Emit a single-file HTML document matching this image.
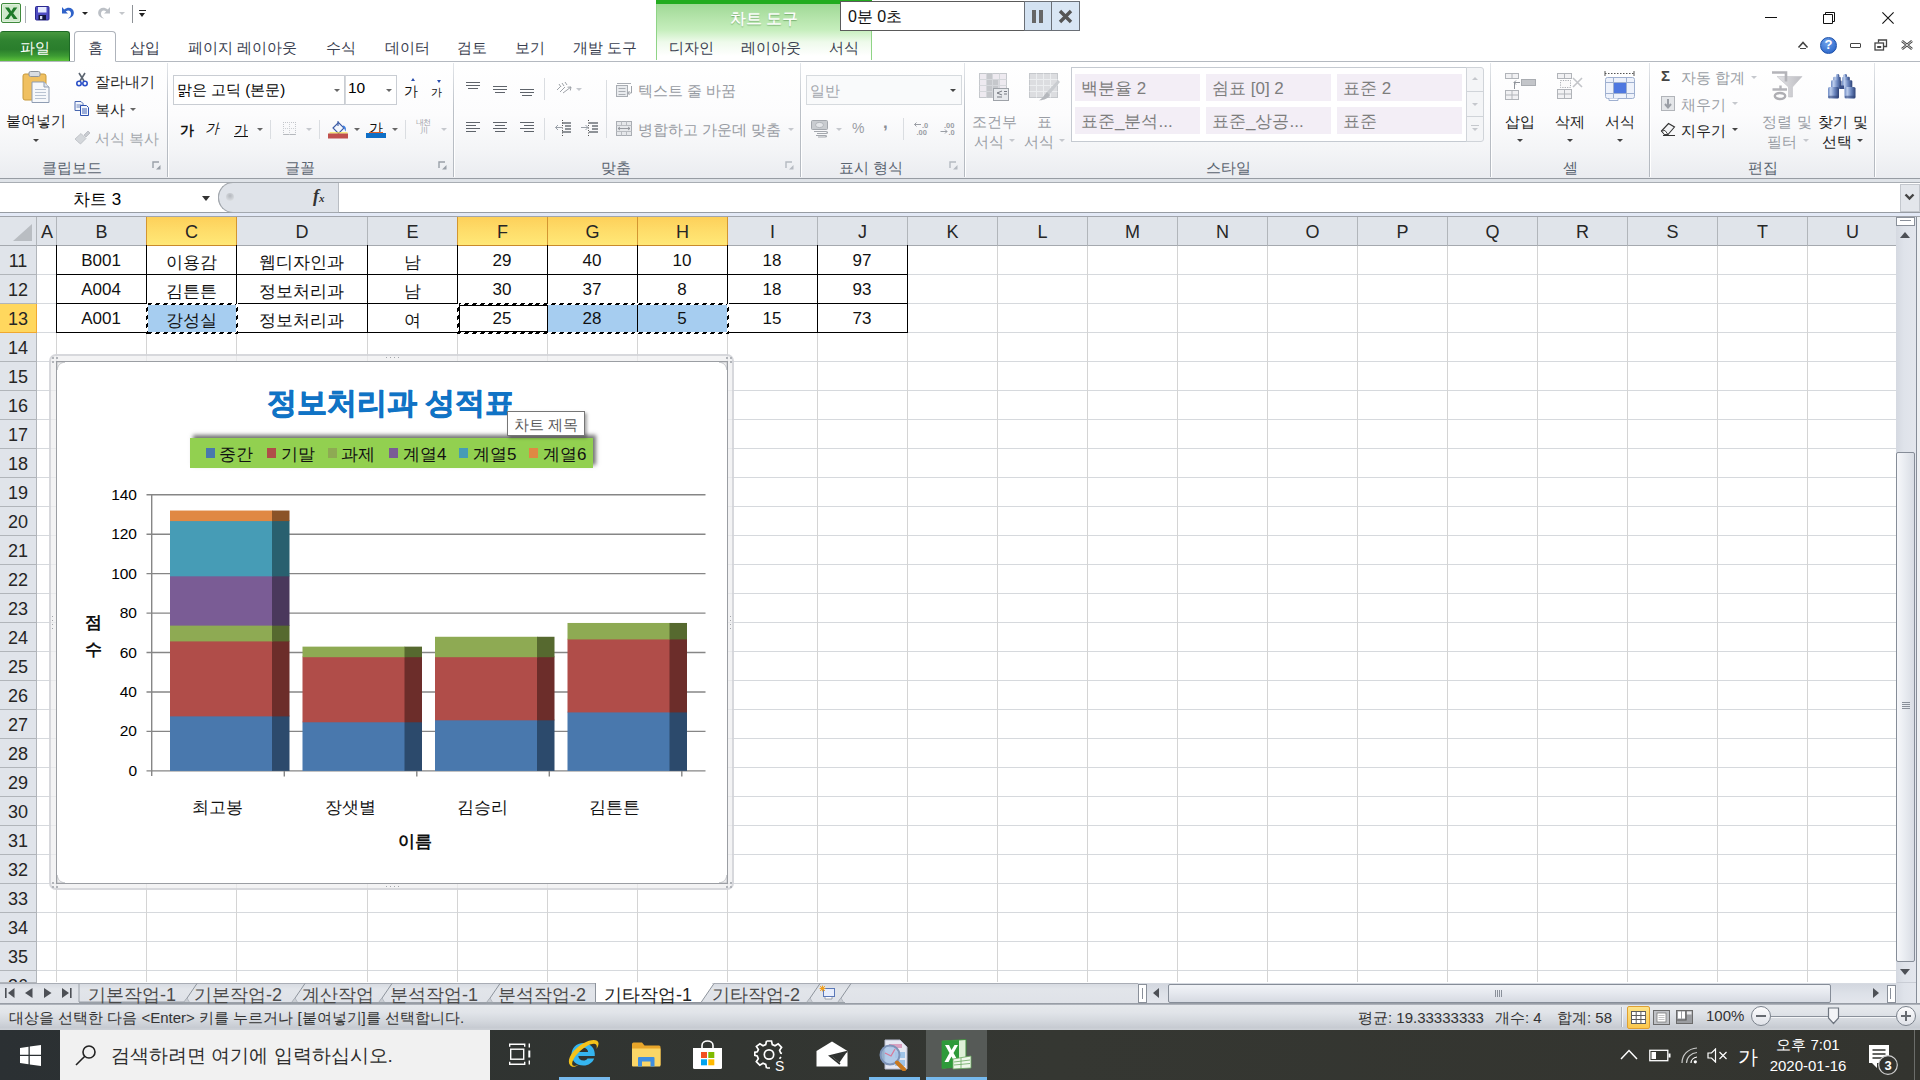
<!DOCTYPE html>
<html lang="ko">
<head>
<meta charset="utf-8">
<title>Excel</title>
<style>
@font-face{font-family:"KFix";src:local("Liberation Sans");unicode-range:U+AC00-D7A3,U+3131-318E,U+5DDD;size-adjust:133.33%}
*{box-sizing:border-box;margin:0;padding:0}
html,body{width:1920px;height:1080px;overflow:hidden;background:#fff}
body{font-family:"KFix","Liberation Sans",sans-serif;font-size:15px;color:#1e1e1e;position:relative}
.a{position:absolute}
.t{position:absolute;white-space:nowrap;font-size:15px;line-height:20px;height:20px;color:#1e1e1e}
.c{text-align:center}
.g{color:#8a8f96}
.gl{color:#5a6470}
.sep{position:absolute;width:1px;background:linear-gradient(#e3e6ea,#bcc1c8 40%,#b4b9c0);top:63px;height:114px}
.sep2{position:absolute;width:1px;background:#fff;top:63px;height:114px}
.dd{position:absolute;width:0;height:0;border-left:3px solid transparent;border-right:3px solid transparent;border-top:3px solid #444}
.ddg{border-top-color:#a0a4aa}
.ch{position:absolute;top:217px;height:29px;background:#e0e4ea;border-right:1px solid #b1b5ba;border-bottom:1px solid #a5a9af;font-size:18px;line-height:30px;text-align:center;color:#262626}
.chs{background:linear-gradient(#fdd05a,#fedd6a 50%,#ffe877);border-right:1px solid #d39631;border-bottom:1px solid #c98a2b;box-shadow:-1px 0 0 #d39631}
.rh{position:absolute;left:0;width:37px;height:29px;background:#e0e4ea;border-right:1px solid #b1b5ba;border-bottom:1px solid #b1b5ba;font-size:18px;line-height:30px;text-align:center;color:#262626}
.vl{position:absolute;top:245px;width:1px;height:737px;background:#d4d4d4}
.cell{position:absolute;height:29px;line-height:30px;font-size:17px;text-align:center;color:#111}
</style>
</head>
<body>
<!-- ===== Title bar / QAT ===== -->
<div class="a" style="left:0;top:0;width:1920px;height:61px;background:#fff"></div>
<!-- excel icon -->
<svg class="a" style="left:1px;top:3px" width="21" height="21" viewBox="0 0 21 21">
<rect x="0.5" y="0.5" width="19" height="19" rx="1.5" fill="#dff0dc" stroke="#3f8a3c"/>
<rect x="2" y="2" width="16" height="16" fill="#cfe8cb"/>
<path d="M4 4.5 L8 4.5 L10.2 8.3 L12.6 4.5 L16.3 4.5 L12.2 10.2 L16.6 16 L12.6 16 L10.1 12.2 L7.6 16 L3.8 16 L8.2 10.2 Z" fill="#1f7a2a"/>
</svg>
<div class="a" style="left:25px;top:6px;width:1px;height:17px;background:#a9adb3"></div>
<!-- save -->
<svg class="a" style="left:35px;top:6px" width="15" height="15" viewBox="0 0 15 15">
<rect x="0.5" y="0.5" width="13.5" height="13.5" rx="1" fill="#4f4cc2" stroke="#2b2990"/>
<rect x="3" y="1" width="8.5" height="5.5" fill="#e8ecff"/>
<rect x="3.5" y="9" width="7.5" height="5" fill="#15173f"/>
<rect x="5" y="10" width="2.3" height="3.2" fill="#d8dcf5"/>
</svg>
<!-- undo -->
<svg class="a" style="left:61px;top:6px" width="14" height="14" viewBox="0 0 14 14">
<path d="M1 1 L1 7.5 L7 7.5 L4.8 5.4 C7.6 3.3 10.4 5.2 10 8.2 C9.7 10.4 8.4 11.6 6.8 12.6 C10.8 12 13.2 9.3 12.8 6 C12.3 1.8 7.2 0.2 3.2 3.5 Z" fill="#2f62c9"/>
</svg>
<div class="dd" style="left:82px;top:12px;border-top-color:#222"></div>
<!-- redo (disabled) -->
<svg class="a" style="left:97px;top:6px" width="14" height="14" viewBox="0 0 14 14">
<path d="M13 1 L13 7.5 L7 7.5 L9.2 5.4 C6.4 3.3 3.6 5.2 4 8.2 C4.3 10.4 5.6 11.6 7.2 12.6 C3.2 12 0.8 9.3 1.2 6 C1.7 1.8 6.8 0.2 10.8 3.5 Z" fill="#bcc0c6"/>
</svg>
<div class="dd ddg" style="left:119px;top:12px;border-top-color:#c3c6ca"></div>
<div class="a" style="left:132px;top:5px;width:1px;height:18px;background:#8d9196"></div>
<div class="a" style="left:139px;top:10px;width:7px;height:1px;background:#222"></div>
<div class="dd" style="left:139px;top:13px;border-left-width:3.5px;border-right-width:3.5px;border-top:4px solid #222"></div>

<!-- chart tools contextual band -->
<div class="a" style="left:656px;top:0;width:216px;height:60px;background:linear-gradient(#96d68c 0px,#a6dc9c 8px,#c6eebd 30px,#eefaeb 42px,#ffffff 56px);border-left:1px solid #8fd486;border-right:1px solid #8fd486"></div>
<div class="a" style="left:656px;top:0;width:216px;height:4px;background:#22ac1e"></div>
<div class="t c" style="left:656px;top:9px;width:216px;color:#ffffff;font-size:16px;text-shadow:0 0 1px #fff,0 1px 1px #5f9f56">차트 도구</div>

<!-- timer overlay -->
<div class="a" style="left:840px;top:1px;width:240px;height:30px;background:#fff;border:1px solid #5a5a5a"></div>
<div class="t" style="left:848px;top:7px;font-size:16px;color:#111">0분 0초</div>
<div class="a" style="left:1024px;top:1px;width:28px;height:30px;background:#d3e2f2;border:1px solid #6a6f76"></div>
<div class="a" style="left:1032px;top:10px;width:4px;height:13px;background:#666"></div>
<div class="a" style="left:1039px;top:10px;width:4px;height:13px;background:#666"></div>
<div class="a" style="left:1051px;top:1px;width:29px;height:30px;background:#d9e6f4;border:1px solid #6a6f76"></div>
<svg class="a" style="left:1058px;top:9px" width="15" height="15" viewBox="0 0 15 15"><path d="M2 2 L13 13 M13 2 L2 13" stroke="#555" stroke-width="3.4"/></svg>

<!-- window controls -->
<div class="a" style="left:1765px;top:17px;width:12px;height:1px;background:#111"></div>
<svg class="a" style="left:1823px;top:12px" width="12" height="12" viewBox="0 0 12 12"><path d="M0.5 2.500 H9.500 V11.500 H0.500 Z M2.500 2.500 V0.500 H11.500 V9.500 H9.500" fill="none" stroke="#111" stroke-width="1"/></svg>
<svg class="a" style="left:1882px;top:12px" width="12" height="12" viewBox="0 0 12 12"><path d="M0.400 0.400 L11.600 11.600 M11.600 0.400 L0.400 11.600" stroke="#111" stroke-width="1.100"/></svg>

<!-- ===== Tab row ===== -->
<div class="a" style="left:0;top:61px;width:1920px;height:1px;background:#b4b9c0"></div>
<div class="a" style="left:0;top:31px;width:70px;height:30px;border-radius:3px 3px 0 0;background:linear-gradient(#47993f 0%,#2f8330 30%,#2a7e2c 60%,#3c9a33 82%,#5cc13a 100%);border:1px solid #1d6a25;border-left:none;border-bottom:none"></div>
<div class="t c" style="left:0;top:38px;width:70px;color:#fff;font-size:15px">파일</div>
<div class="a" style="left:74px;top:31px;width:42px;height:31px;border-radius:4px 4px 0 0;background:#fff;border:1px solid #aeb3bb;border-bottom:1px solid #fff"></div>
<div class="t c" style="left:74px;top:38px;width:42px;color:#3a4050">홈</div>
<div class="t" style="left:130px;top:38px;color:#3a4050">삽입</div>
<div class="t" style="left:188px;top:38px;color:#3a4050">페이지 레이아웃</div>
<div class="t" style="left:326px;top:38px;color:#3a4050">수식</div>
<div class="t" style="left:385px;top:38px;color:#3a4050">데이터</div>
<div class="t" style="left:457px;top:38px;color:#3a4050">검토</div>
<div class="t" style="left:515px;top:38px;color:#3a4050">보기</div>
<div class="t" style="left:573px;top:38px;color:#3a4050">개발 도구</div>
<div class="t" style="left:669px;top:38px;color:#3a4050">디자인</div>
<div class="t" style="left:741px;top:38px;color:#3a4050">레이아웃</div>
<div class="t" style="left:829px;top:38px;color:#3a4050">서식</div>
<!-- right icons in tab row -->
<svg class="a" style="left:1797px;top:40px" width="12" height="10" viewBox="0 0 12 10"><path d="M1.5 7.5 L6 2.5 L10.5 7.5" fill="none" stroke="#444" stroke-width="1.6"/><path d="M3 8.5 H9" stroke="#444" stroke-width="1"/></svg>
<div class="a" style="left:1820px;top:37px;width:17px;height:17px;border-radius:9px;background:radial-gradient(circle at 40% 30%,#6ea2ea,#1f5bc4);border:1px solid #1c4fa8"></div>
<div class="t c" style="left:1820px;top:35px;width:17px;color:#fff;font-weight:bold;font-size:13px">?</div>
<div class="a" style="left:1850px;top:43px;width:11px;height:5px;border:1px solid #444;border-radius:1px"></div>
<svg class="a" style="left:1874px;top:39px" width="14" height="12" viewBox="0 0 14 12"><path d="M4.5 3.5 V1 H12.5 V7.5 H10" fill="none" stroke="#444" stroke-width="1.3"/><rect x="1" y="4" width="8.5" height="7" fill="none" stroke="#444" stroke-width="1.3"/><rect x="3.2" y="7" width="4" height="2" fill="#444"/></svg>
<svg class="a" style="left:1901px;top:40px" width="12" height="10" viewBox="0 0 12 10"><path d="M1 1 L11 9 M11 1 L1 9" stroke="#444" stroke-width="2.6"/><path d="M1 1 L11 9 M11 1 L1 9" stroke="#fff" stroke-width="0.8"/></svg>
<!-- ===== Ribbon body ===== -->
<div class="a" style="left:0;top:62px;width:1920px;height:116px;background:linear-gradient(#ffffff 0%,#fcfcfd 45%,#f4f5f7 75%,#eaecf0 100%)"></div>
<div class="a" style="left:0;top:178px;width:1920px;height:1px;background:#979ca3"></div>
<div class="a" style="left:0;top:179px;width:1920px;height:4px;background:linear-gradient(#c3c7cd,#dfe2e7)"></div>
<!-- group separators -->
<div class="sep" style="left:167px"></div><div class="sep2" style="left:168px"></div>
<div class="sep" style="left:453px"></div><div class="sep2" style="left:454px"></div>
<div class="sep" style="left:800px"></div><div class="sep2" style="left:801px"></div>
<div class="sep" style="left:964px"></div><div class="sep2" style="left:965px"></div>
<div class="sep" style="left:1490px"></div><div class="sep2" style="left:1491px"></div>
<div class="sep" style="left:1649px"></div><div class="sep2" style="left:1650px"></div>
<div class="sep" style="left:1874px"></div><div class="sep2" style="left:1875px"></div>
<!-- group labels -->
<div class="t c gl" style="left:22px;top:158px;width:100px">클립보드</div>
<div class="t c gl" style="left:250px;top:158px;width:100px">글꼴</div>
<div class="t c gl" style="left:566px;top:158px;width:100px">맞춤</div>
<div class="t c gl" style="left:821px;top:158px;width:100px">표시 형식</div>
<div class="t c gl" style="left:1178px;top:158px;width:100px">스타일</div>
<div class="t c gl" style="left:1520px;top:158px;width:100px">셀</div>
<div class="t c gl" style="left:1713px;top:158px;width:100px">편집</div>
<!-- dialog launchers -->
<svg class="a" style="left:152px;top:161px" width="10" height="10" viewBox="0 0 10 10"><path d="M1 7 V1 H7" fill="none" stroke="#9aa0a8" stroke-width="1.4"/><path d="M4 8.5 H8.5 V4 Z" fill="#9aa0a8"/></svg>
<svg class="a" style="left:438px;top:161px" width="10" height="10" viewBox="0 0 10 10"><path d="M1 7 V1 H7" fill="none" stroke="#9aa0a8" stroke-width="1.4"/><path d="M4 8.5 H8.5 V4 Z" fill="#9aa0a8"/></svg>
<svg class="a" style="left:785px;top:161px" width="10" height="10" viewBox="0 0 10 10"><path d="M1 7 V1 H7" fill="none" stroke="#b5bac1" stroke-width="1.4"/><path d="M4 8.5 H8.5 V4 Z" fill="#b5bac1"/></svg>
<svg class="a" style="left:949px;top:161px" width="10" height="10" viewBox="0 0 10 10"><path d="M1 7 V1 H7" fill="none" stroke="#b5bac1" stroke-width="1.4"/><path d="M4 8.5 H8.5 V4 Z" fill="#b5bac1"/></svg>

<!-- Clipboard group -->
<svg class="a" style="left:22px;top:70px" width="30" height="34" viewBox="0 0 30 34">
<rect x="1" y="4" width="23" height="26" rx="2" fill="#f0c060" stroke="#c89a3a"/>
<rect x="7" y="1.5" width="11" height="5" rx="1.5" fill="#d9dde2" stroke="#8e949b"/>
<path d="M10 12 H22 L27 17 V32.5 H10 Z" fill="#f6f8fb" stroke="#8f9db3"/>
<path d="M22 12 V17 H27" fill="#dfe5ee" stroke="#8f9db3"/>
<path d="M13 19.5 H24 M13 22.5 H24 M13 25.5 H24 M13 28.5 H24" stroke="#b9c3d2" stroke-width="1"/>
</svg>
<div class="t c" style="left:0;top:111px;width:72px">붙여넣기</div>
<div class="dd" style="left:33px;top:139px"></div>
<!-- scissors -->
<svg class="a" style="left:76px;top:72px" width="12" height="15" viewBox="0 0 12 15">
<path d="M3 1 L8 9 M9 1 L4 9" stroke="#5b6470" stroke-width="1.6"/>
<circle cx="3" cy="11.5" r="2.2" fill="none" stroke="#2c50c8" stroke-width="1.6"/><circle cx="9" cy="11.5" r="2.2" fill="none" stroke="#2c50c8" stroke-width="1.6"/>
</svg>
<div class="t" style="left:95px;top:72px">잘라내기</div>
<!-- copy -->
<svg class="a" style="left:74px;top:101px" width="16" height="15" viewBox="0 0 16 15">
<path d="M1 0.5 H7 L9 2.5 V9.5 H1 Z" fill="#f4f7fc" stroke="#4a68b0"/><path d="M2.5 4 H7.5 M2.5 6 H7.5" stroke="#4a68b0" stroke-width="0.8"/>
<path d="M6.5 4.5 H12.5 L14.5 6.5 V14.5 H6.5 Z" fill="#f4f7fc" stroke="#2c50b0"/><path d="M8 8 H13 M8 10 H13 M8 12 H13" stroke="#2c50b0" stroke-width="0.9"/>
</svg>
<div class="t" style="left:95px;top:100px">복사</div>
<div class="dd" style="left:130px;top:108px;border-top-color:#666"></div>
<!-- format painter -->
<svg class="a" style="left:74px;top:130px" width="17" height="15" viewBox="0 0 17 15">
<path d="M10 5 L14 1 L16 3 L12 7 Z" fill="#c9ccd1" stroke="#a9adb3" stroke-width="0.6"/>
<path d="M1 9 L7 3.5 L12 8.5 L6.5 14 C4.5 12 2.5 11 1 9 Z" fill="#d4d7db" stroke="#b3b7bd" stroke-width="0.7"/>
</svg>
<div class="t g" style="left:95px;top:129px;color:#a3a7ad">서식 복사</div>

<!-- Font group -->
<div class="a" style="left:173px;top:75px;width:172px;height:30px;background:#fff;border:1px solid #c9cdd3"></div>
<div class="a" style="left:345px;top:75px;width:52px;height:30px;background:#fff;border:1px solid #c9cdd3;border-left-color:#d5d8dc"></div>
<div class="t" style="left:177px;top:80px;color:#000;font-size:15px">맑은 고딕 (본문)</div>
<div class="dd" style="left:334px;top:89px;border-top-color:#666"></div>
<div class="t" style="left:348px;top:78px;color:#000;font-size:15.5px">10</div>
<div class="dd" style="left:386px;top:89px;border-top-color:#666"></div>
<div class="t" style="left:404px;top:81px;font-size:14px;color:#111">가</div>
<div class="a" style="left:411px;top:78px;width:0;height:0;border-left:2.5px solid transparent;border-right:2.5px solid transparent;border-bottom:3px solid #2b4fae"></div>
<div class="t" style="left:431px;top:82px;font-size:11px;color:#111">가</div>
<div class="a" style="left:437px;top:80px;width:0;height:0;border-left:2.5px solid transparent;border-right:2.5px solid transparent;border-top:3px solid #2b4fae"></div>
<div class="t" style="left:180px;top:120px;font-size:14px;font-weight:bold;color:#111">가</div>
<div class="t" style="left:206px;top:118px;font-size:14px;color:#111;transform:skewX(-14deg)">가</div>
<div class="t" style="left:234px;top:120px;font-size:14px;color:#111;text-decoration:underline">가</div>
<div class="dd" style="left:257px;top:128px;border-top-color:#666"></div>
<div class="a" style="left:270px;top:120px;width:1px;height:19px;background:#dadde1"></div>
<div class="a" style="left:283px;top:122px;width:13px;height:13px;border:1px dotted #c3c6cb;border-bottom:1px solid #b5b8bd"></div>
<div class="a" style="left:289px;top:122px;width:1px;height:13px;border-left:1px dotted #cdd0d4"></div>
<div class="a" style="left:283px;top:128px;width:13px;height:1px;border-top:1px dotted #cdd0d4"></div>
<div class="dd ddg" style="left:306px;top:128px;border-top-color:#c5c8cd"></div>
<div class="a" style="left:319px;top:120px;width:1px;height:19px;background:#dadde1"></div>
<!-- fill bucket -->
<svg class="a" style="left:328px;top:120px" width="21" height="19" viewBox="0 0 21 19">
<path d="M5 8 L10.5 2.5 L16 8 L10.5 13.5 Z" fill="#f2f6fc" stroke="#3b5ba5" stroke-width="1.1"/>
<path d="M10 1 V6" stroke="#3b5ba5" stroke-width="1.1"/>
<path d="M15 5.5 C18 6 18.5 9 17.5 11.5 C16.5 10 16.5 8 15 7 Z" fill="#3f7fe0"/>
<rect x="1.5" y="12.3" width="18" height="1.2" fill="#f2e24a"/>
<rect x="0" y="13.5" width="20" height="5" fill="#c0504d"/>
</svg>
<div class="dd" style="left:354px;top:128px;border-top-color:#666"></div>
<div class="t" style="left:369px;top:118px;font-size:14px;color:#111">가</div>
<div class="a" style="left:369px;top:132px;width:14px;height:1px;background:#e0622a"></div>
<div class="a" style="left:366px;top:133px;width:20px;height:5px;background:#0f6fc6"></div>
<div class="dd" style="left:392px;top:128px;border-top-color:#666"></div>
<div class="a" style="left:405px;top:120px;width:1px;height:19px;background:#dadde1"></div>
<div class="t g" style="left:416px;top:119px;font-size:8px;line-height:8px;height:18px;white-space:normal;width:14px;text-align:center;color:#9ea2a8;letter-spacing:-1px">내천<br>川</div>
<div class="dd ddg" style="left:441px;top:128px;border-top-color:#c5c8cd"></div>

<!-- Alignment group -->
<svg class="a" style="left:464px;top:80px" width="72" height="18" viewBox="0 0 72 18">
<g stroke="#5e636a" stroke-width="1">
<path d="M2 2.5 H16 M2 5.5 H16 M4 8.5 H14"/>
<path d="M29 6.5 H43 M29 9.5 H43 M31 12.5 H41"/>
<path d="M56 9.5 H70 M56 12.5 H70 M58 15.5 H68"/>
</g></svg>
<div class="a" style="left:544px;top:78px;width:1px;height:22px;background:#dadde1"></div>
<svg class="a" style="left:555px;top:81px" width="18" height="17" viewBox="0 0 18 17"><g stroke="#9ea2a8" stroke-width="1" fill="none"><path d="M2 9 L6 5 M5 11 L10 6 M8 12 L16 6 M16 6 L12.5 6.2 M16 6 L15.3 9.5"/><path d="M4 3 L6 6 M7 2 L9 5 M10 1 L12 4"/></g></svg>
<div class="dd ddg" style="left:576px;top:88px;border-top-color:#c5c8cd"></div>
<div class="a" style="left:606px;top:80px;width:1px;height:58px;background:#dadde1"></div>
<svg class="a" style="left:616px;top:82px" width="17" height="16" viewBox="0 0 17 16"><rect x="0.5" y="3.5" width="11" height="11" fill="#e9ebee" stroke="#a9adb3"/><path d="M1 1.5 H15 M2.5 6.5 H9.5 M2.5 9.5 H9.5 M2.5 12.5 H9.5" stroke="#a9adb3"/><path d="M15.5 4 V11 H12 M13.5 9 L11.8 11 L13.5 13" stroke="#9ea2a8" fill="none"/></svg>
<div class="t" style="left:638px;top:81px;color:#979ba2">텍스트 줄 바꿈</div>
<svg class="a" style="left:464px;top:120px" width="72" height="16" viewBox="0 0 72 16">
<g stroke="#5e636a" stroke-width="1">
<path d="M2 2.5 H16 M2 5.5 H12 M2 8.5 H16 M2 11.5 H12"/>
<path d="M29 2.5 H43 M31 5.5 H41 M29 8.5 H43 M31 11.5 H41"/>
<path d="M56 2.5 H70 M60 5.5 H70 M56 8.5 H70 M60 11.5 H70"/>
</g></svg>
<div class="a" style="left:544px;top:118px;width:1px;height:22px;background:#dadde1"></div>
<svg class="a" style="left:554px;top:120px" width="45" height="16" viewBox="0 0 45 16">
<g stroke="#6c7178" stroke-width="1.3"><path d="M8 3 H17 M11 6 H17 M11 9 H17 M8 12 H17"/><path d="M35 3 H44 M38 6 H44 M38 9 H44 M35 12 H44"/></g>
<g stroke="#9aa0a8" stroke-width="1" fill="none"><path d="M8 7.5 H1.5 M4 5 L1.5 7.5 L4 10"/><path d="M27 7.5 H34 M31.5 5 L34 7.5 L31.5 10"/><path d="M8.5 0 V16 M34.5 0 V16" stroke-dasharray="1 1.5" stroke="#555"/></g></svg>
<svg class="a" style="left:616px;top:121px" width="17" height="15" viewBox="0 0 17 15"><rect x="0.5" y="0.5" width="15" height="14" fill="#e6e8eb" stroke="#a9adb3"/><path d="M0.5 4.5 H15.5 M0.5 10.5 H15.5 M5.5 0.5 V4.5 M10.5 0.5 V4.5 M5.5 10.5 V14.5 M10.5 10.5 V14.5" stroke="#b9bcc1"/><path d="M2 7.5 H14 M4 6 L2 7.5 L4 9 M12 6 L14 7.5 L12 9" stroke="#8e9299" fill="none" stroke-width="0.9"/></svg>
<div class="t" style="left:638px;top:120px;color:#979ba2">병합하고 가운데 맞춤</div>
<div class="dd ddg" style="left:788px;top:128px;border-top-color:#c5c8cd"></div>
<!-- Number group -->
<div class="a" style="left:806px;top:75px;width:156px;height:30px;background:#f9fafb;border:1px solid #d6dade"></div>
<div class="t" style="left:810px;top:81px;color:#a3a7ad">일반</div>
<div class="dd" style="left:950px;top:89px;border-top-color:#444"></div>
<svg class="a" style="left:811px;top:120px" width="19" height="18" viewBox="0 0 19 18"><rect x="0.5" y="0.5" width="16" height="9" rx="1" fill="#c9ccd0" stroke="#a3a7ad"/><ellipse cx="8.5" cy="5" rx="4" ry="2.6" fill="#e4e6e9" stroke="#a3a7ad" stroke-width="0.7"/><path d="M3 11.5 H15 C17 11.5 17 13.5 15 13.5 H6 M5 15.5 H14 C16 15.5 16 17 14 17 H7" stroke="#a3a7ad" fill="none" stroke-width="1.2"/></svg>
<div class="dd ddg" style="left:836px;top:128px;border-top-color:#c5c8cd"></div>
<div class="t" style="left:852px;top:118px;color:#9a9ea5;font-size:14px">%</div>
<div class="t" style="left:883px;top:113px;color:#8a8e95;font-size:17px;font-weight:bold">,</div>
<div class="a" style="left:903px;top:118px;width:1px;height:22px;background:#dadde1"></div>
<svg class="a" style="left:913px;top:121px" width="18" height="15" viewBox="0 0 18 15"><g fill="#9a9ea5" font-family="Liberation Sans" font-size="7.5" font-weight="bold"><text x="9" y="6.5">.0</text><text x="3.5" y="14">.00</text></g><path d="M8 3.5 H1.5 M3.5 1.5 L1.5 3.5 L3.5 5.5" stroke="#9a9ea5" fill="none" stroke-width="1"/></svg>
<svg class="a" style="left:939px;top:121px" width="18" height="15" viewBox="0 0 18 15"><g fill="#9a9ea5" font-family="Liberation Sans" font-size="7.5" font-weight="bold"><text x="5" y="6.5">.00</text><text x="9.5" y="14">.0</text></g><path d="M1.5 10.5 H8 M6 8.5 L8 10.5 L6 12.5" stroke="#9a9ea5" fill="none" stroke-width="1"/></svg>

<!-- Styles group -->
<svg class="a" style="left:979px;top:73px" width="31" height="29" viewBox="0 0 31 29">
<rect x="0.5" y="0.5" width="27" height="24" fill="#eeeaf0" stroke="#c5c8cc"/>
<rect x="7.5" y="0.5" width="6" height="24" fill="#c5c7cb"/><rect x="13.5" y="6.5" width="6" height="12" fill="#c5c7cb"/>
<path d="M0.5 6.5 H27.5 M0.5 12.5 H27.5 M0.5 18.5 H27.5 M7.5 0.5 V24.5 M13.5 0.5 V24.5 M20.5 0.5 V24.5" stroke="#d5d7db" stroke-width="1" fill="none"/>
<rect x="14.5" y="15.5" width="15" height="12" fill="#e8eaed" stroke="#9ea2a8"/>
<path d="M23 18 L18 20 L23 22 M18 24 H23 M25 18.5 H28 M25 21 H28" stroke="#777b82" fill="none" stroke-width="1"/>
</svg>
<div class="t c" style="left:964px;top:112px;width:60px;color:#9a9ea5">조건부</div>
<div class="t" style="left:974px;top:132px;color:#9a9ea5">서식</div>
<div class="dd ddg" style="left:1009px;top:139px;border-top-color:#c5c8cd"></div>
<svg class="a" style="left:1029px;top:73px" width="32" height="29" viewBox="0 0 32 29">
<rect x="0.5" y="0.5" width="28" height="24" fill="#dcdde0" stroke="#c5c8cc"/>
<path d="M0.5 6.5 H28.5 M0.5 12.5 H28.5 M0.5 18.5 H28.5 M7.5 0.5 V24.5 M14.5 0.5 V24.5 M21.5 0.5 V24.5" stroke="#eceef0" stroke-width="1" fill="none"/>
<path d="M29 7 L31 9 L20 22 L17 20 Z" fill="#c9ccd0"/><path d="M18 19 L21 22 C18 27 13 27 10 27.5 C14 25 15 22 18 19 Z" fill="#b5b8bd"/>
</svg>
<div class="t c" style="left:1024px;top:112px;width:40px;color:#9a9ea5">표</div>
<div class="t" style="left:1024px;top:132px;color:#9a9ea5">서식</div>
<div class="dd ddg" style="left:1059px;top:139px;border-top-color:#c5c8cd"></div>
<div class="a" style="left:1071px;top:67px;width:396px;height:75px;background:#fff;border:1px solid #c5cad1"></div>
<div class="a" style="left:1466px;top:67px;width:18px;height:75px;background:#f4f5f7;border:1px solid #d0d4d9;border-radius:0 3px 3px 0"></div>
<div class="a" style="left:1467px;top:91px;width:16px;height:1px;background:#d0d4d9"></div>
<div class="a" style="left:1467px;top:116px;width:16px;height:1px;background:#d0d4d9"></div>
<div class="a" style="left:1472px;top:77px;width:0;height:0;border-left:3px solid transparent;border-right:3px solid transparent;border-bottom:3px solid #c5c8cd"></div>
<div class="dd ddg" style="left:1472px;top:103px;border-top-color:#c5c8cd"></div>
<div class="a" style="left:1471px;top:125px;width:8px;height:1px;background:#c5c8cd"></div>
<div class="dd ddg" style="left:1472px;top:128px;border-top-color:#c5c8cd"></div>
<div class="a" style="left:1075px;top:74px;width:125px;height:27px;background:#f3eef6"></div>
<div class="a" style="left:1206px;top:74px;width:125px;height:27px;background:#f3eef6"></div>
<div class="a" style="left:1337px;top:74px;width:125px;height:27px;background:#f3eef6"></div>
<div class="a" style="left:1075px;top:107px;width:125px;height:27px;background:#f3eef6"></div>
<div class="a" style="left:1206px;top:107px;width:125px;height:27px;background:#f3eef6"></div>
<div class="a" style="left:1337px;top:107px;width:125px;height:27px;background:#f3eef6"></div>
<div class="t" style="left:1081px;top:79px;font-size:17px;color:#7d7d7d">백분율 2</div>
<div class="t" style="left:1212px;top:79px;font-size:17px;color:#7d7d7d">쉼표 [0] 2</div>
<div class="t" style="left:1343px;top:79px;font-size:17px;color:#7d7d7d">표준 2</div>
<div class="t" style="left:1081px;top:112px;font-size:17px;color:#7d7d7d">표준_분석...</div>
<div class="t" style="left:1212px;top:112px;font-size:17px;color:#7d7d7d">표준_상공...</div>
<div class="t" style="left:1343px;top:112px;font-size:17px;color:#7d7d7d">표준</div>

<!-- Cells group -->
<svg class="a" style="left:1505px;top:73px" width="31" height="27" viewBox="0 0 31 27">
<rect x="0.5" y="0.5" width="13" height="5" fill="#f1f1f3" stroke="#b1b4b9"/><path d="M7 0.5 V5.5" stroke="#b1b4b9"/>
<rect x="16.5" y="6.5" width="14" height="6" fill="#c3c5c9" stroke="#a9acb1"/>
<rect x="0.5" y="17.5" width="13" height="9" fill="#f1f1f3" stroke="#b1b4b9"/><path d="M7 17.5 V26.5 M0.5 22 H13.5" stroke="#b1b4b9"/>
<path d="M15 9.5 H9 M11 7.5 L9 9.5 L11 11.5 M9.5 9.5 V16" stroke="#8e9299" fill="none"/>
</svg>
<div class="t c" style="left:1500px;top:112px;width:40px">삽입</div>
<div class="dd" style="left:1517px;top:139px"></div>
<svg class="a" style="left:1557px;top:73px" width="28" height="27" viewBox="0 0 28 27">
<rect x="0.5" y="0.5" width="14" height="5" fill="#f1f1f3" stroke="#b1b4b9"/><path d="M7.5 0.5 V5.5" stroke="#b1b4b9"/>
<rect x="3.5" y="7.5" width="10" height="7" fill="#fafafa" stroke="#a9acb1" stroke-dasharray="1.2 1.2"/>
<rect x="0.5" y="16.5" width="14" height="9" fill="#f1f1f3" stroke="#b1b4b9"/><path d="M7.5 16.5 V25.5 M0.5 21 H14.5" stroke="#b1b4b9"/>
<path d="M16 5 L25 14 M25 5 L16 14" stroke="#c3c5c9" stroke-width="1.6"/>
</svg>
<div class="t c" style="left:1550px;top:112px;width:40px">삭제</div>
<div class="dd" style="left:1567px;top:139px"></div>
<svg class="a" style="left:1604px;top:71px" width="32" height="30" viewBox="0 0 32 30">
<path d="M1 2.5 H30" stroke="#555" stroke-dasharray="1.5 1.5"/><path d="M1 0 V5 M30 0 V5" stroke="#555"/>
<rect x="1.5" y="6.5" width="29" height="21" rx="2" fill="#eef2fb" stroke="#9fb0d0"/>
<path d="M9.500 6.500 V27.500 M22.500 6.500 V27.500 M1.500 11.500 H30.500 M1.500 22.500 H30.500" stroke="#9fb0d0"/>
<rect x="10" y="12" width="12" height="10" fill="#4f78e0"/>
<path d="M5 27.500 V29.500 H14 V27.500" stroke="#9fb0d0" fill="#fff"/>
</svg>
<div class="t c" style="left:1600px;top:112px;width:40px">서식</div>
<div class="dd" style="left:1617px;top:139px"></div>

<!-- Editing group -->
<div class="t" style="left:1661px;top:66px;font-size:15px;font-weight:bold;color:#444">Σ</div>
<div class="t" style="left:1681px;top:68px;color:#9a9ea5">자동 합계</div>
<div class="dd ddg" style="left:1751px;top:76px;border-top-color:#c5c8cd"></div>
<svg class="a" style="left:1661px;top:96px" width="14" height="15" viewBox="0 0 14 15"><rect x="0.5" y="0.5" width="13" height="14" fill="#e4e6e9" stroke="#b1b4b9"/><path d="M7 3 V11 M4 8 L7 11.5 L10 8" stroke="#9a9ea5" stroke-width="2" fill="none"/></svg>
<div class="t" style="left:1681px;top:95px;color:#9a9ea5">채우기</div>
<div class="dd ddg" style="left:1732px;top:102px;border-top-color:#c5c8cd"></div>
<svg class="a" style="left:1660px;top:122px" width="16" height="14" viewBox="0 0 16 14"><path d="M1.5 9 L8.5 1.5 L14.5 5 L8 12.5 H4.5 Z" fill="#f3f4f6" stroke="#333" stroke-width="1.1"/><path d="M1.5 9 L4.5 12.5 H8 L5 8.5 Z" fill="#fff" stroke="#333" stroke-width="0.9"/><path d="M3 13.500 H15" stroke="#333"/></svg>
<div class="t" style="left:1681px;top:121px">지우기</div>
<div class="dd" style="left:1732px;top:128px"></div>
<svg class="a" style="left:1771px;top:70px" width="33" height="31" viewBox="0 0 33 31">
<defs><linearGradient id="fg" x1="0" x2="1"><stop offset="0" stop-color="#e3e3e6"/><stop offset="1" stop-color="#bdbdc2"/></linearGradient></defs>
<path d="M6 6.500 H31 L21.500 17 V27 H17.500 V17 Z" fill="url(#fg)" stroke="#c3c3c8" stroke-width="0.600"/>
<path d="M1 2.500 H15 V11.500" fill="none" stroke="#b4b4b9" stroke-width="2.600"/>
<path d="M1.500 19.500 H16 M9.500 19.500 V15.500" fill="none" stroke="#b4b4b9" stroke-width="2.400"/>
<ellipse cx="9" cy="26" rx="5.200" ry="3" fill="none" stroke="#aeaeb3" stroke-width="2.400"/>
</svg>
<div class="t c" style="left:1757px;top:112px;width:60px;color:#9a9ea5">정렬 및</div>
<div class="t" style="left:1767px;top:132px;color:#9a9ea5">필터</div>
<div class="dd ddg" style="left:1803px;top:139px;border-top-color:#c5c8cd"></div>
<svg class="a" style="left:1827px;top:73px" width="30" height="26" viewBox="0 0 30 26">
<defs><linearGradient id="bg" x1="0" x2="1"><stop offset="0" stop-color="#6f8bc4"/><stop offset="0.250" stop-color="#bccdec"/><stop offset="0.600" stop-color="#6d88c0"/><stop offset="1" stop-color="#2d4277"/></linearGradient></defs>
<rect x="9" y="1" width="3.200" height="3.500" rx="1.300" fill="url(#bg)"/><rect x="16.600" y="1" width="3.200" height="3.500" rx="1.300" fill="url(#bg)"/>
<rect x="6.200" y="3.800" width="7.500" height="4.500" rx="1.300" fill="url(#bg)"/><rect x="15.300" y="3.800" width="7.500" height="4.500" rx="1.300" fill="url(#bg)"/>
<rect x="4" y="7.300" width="10.500" height="8.500" rx="1.300" fill="url(#bg)"/><rect x="14.800" y="7.300" width="10.500" height="8.500" rx="1.300" fill="url(#bg)"/>
<rect x="12.500" y="12.500" width="4.500" height="3.500" fill="#3a5088"/>
<rect x="1" y="14" width="11" height="11.500" rx="1.600" fill="url(#bg)"/><rect x="17.500" y="14" width="11" height="11.500" rx="1.600" fill="url(#bg)"/>
<rect x="1.300" y="22.800" width="10.400" height="2.400" rx="1" fill="#2f4478" fill-opacity="0.550"/><rect x="17.800" y="22.800" width="10.400" height="2.400" rx="1" fill="#2f4478" fill-opacity="0.550"/>
</svg>
<div class="t c" style="left:1813px;top:112px;width:60px">찾기 및</div>
<div class="t" style="left:1822px;top:132px">선택</div>
<div class="dd" style="left:1857px;top:139px"></div>
<!-- ===== Formula bar ===== -->
<div class="a" style="left:0;top:179px;width:1920px;height:3px;background:#dfe3e8"></div>
<div class="a" style="left:0;top:182px;width:1920px;height:31px;background:#fff;border-top:1px solid #a8adb3;border-bottom:1px solid #979ca3"></div>
<div class="a" style="left:0;top:213px;width:1920px;height:4px;background:linear-gradient(#e3e9f6 0,#e3e9f6 3px,#a0a4ab 3px,#a0a4ab 4px)"></div>
<div class="a" style="left:218px;top:183px;width:121px;height:29px;background:#dfe3e9;border:1px solid #a3a8ae;border-top:none;border-bottom:none;border-radius:15px 0 0 15px;border-right:1px solid #b9bdc3"></div>
<div class="a" style="left:218px;top:182px;width:121px;height:31px;border:1px solid #a3a8ae;border-right:none;border-radius:15px 0 0 15px"></div>
<div class="a" style="left:226px;top:193px;width:8px;height:8px;border-radius:4px;background:radial-gradient(circle at 50% 35%,#b4b8be,#e6e9ed)"></div>
<div class="t" style="left:313px;top:186px;font-family:'Liberation Serif',serif;font-style:italic;font-weight:bold;font-size:18px;color:#333">f<span style="font-size:11px">x</span></div>
<div class="t" style="left:73px;top:190px;font-size:17px;color:#000">차트 3</div>
<div class="a" style="left:202px;top:196px;width:0;height:0;border-left:4.5px solid transparent;border-right:4.5px solid transparent;border-top:5px solid #333"></div>
<div class="a" style="left:1900px;top:184px;width:20px;height:28px;background:#e3e6eb;border:1px solid #c3c7cd"></div>
<svg class="a" style="left:1904px;top:193px" width="11" height="9" viewBox="0 0 11 9"><path d="M1.5 1.5 L5.5 5.5 L9.5 1.5" fill="none" stroke="#444" stroke-width="2.4"/></svg>
<!-- ===== Grid ===== -->
<div class="a" style="left:37px;top:246px;width:1859px;height:737px;background:repeating-linear-gradient(#fff 0,#fff 28px,#d6d9dd 28px,#d6d9dd 29px)"></div>
<div class="vl" style="left:56px"></div>
<div class="vl" style="left:146px"></div>
<div class="vl" style="left:236px"></div>
<div class="vl" style="left:367px"></div>
<div class="vl" style="left:457px"></div>
<div class="vl" style="left:547px"></div>
<div class="vl" style="left:637px"></div>
<div class="vl" style="left:727px"></div>
<div class="vl" style="left:817px"></div>
<div class="vl" style="left:907px"></div>
<div class="vl" style="left:997px"></div>
<div class="vl" style="left:1087px"></div>
<div class="vl" style="left:1177px"></div>
<div class="vl" style="left:1267px"></div>
<div class="vl" style="left:1357px"></div>
<div class="vl" style="left:1447px"></div>
<div class="vl" style="left:1537px"></div>
<div class="vl" style="left:1627px"></div>
<div class="vl" style="left:1717px"></div>
<div class="vl" style="left:1807px"></div>
<div class="vl" style="left:1897px"></div>
<div class="a" style="left:0;top:217px;width:1897px;height:29px;background:#e0e4ea;border-bottom:1px solid #a9adb3"></div>
<div class="a" style="left:0;top:217px;width:37px;height:29px;border-right:1px solid #b1b5ba;border-bottom:1px solid #a5a9af"></div>
<svg class="a" style="left:12px;top:224px" width="21" height="18" viewBox="0 0 21 18"><path d="M20 0 V17 H1 Z" fill="#b9bdc2"/></svg>
<div class="ch" style="left:38px;width:19px">A</div>
<div class="ch" style="left:57px;width:90px">B</div>
<div class="ch chs" style="left:147px;width:90px">C</div>
<div class="ch" style="left:237px;width:131px">D</div>
<div class="ch" style="left:368px;width:90px">E</div>
<div class="ch chs" style="left:458px;width:90px">F</div>
<div class="ch chs" style="left:548px;width:90px">G</div>
<div class="ch chs" style="left:638px;width:90px">H</div>
<div class="ch" style="left:728px;width:90px">I</div>
<div class="ch" style="left:818px;width:90px">J</div>
<div class="ch" style="left:908px;width:90px">K</div>
<div class="ch" style="left:998px;width:90px">L</div>
<div class="ch" style="left:1088px;width:90px">M</div>
<div class="ch" style="left:1178px;width:90px">N</div>
<div class="ch" style="left:1268px;width:90px">O</div>
<div class="ch" style="left:1358px;width:90px">P</div>
<div class="ch" style="left:1448px;width:90px">Q</div>
<div class="ch" style="left:1538px;width:90px">R</div>
<div class="ch" style="left:1628px;width:90px">S</div>
<div class="ch" style="left:1718px;width:90px">T</div>
<div class="ch" style="left:1808px;width:90px">U</div>
<div class="rh" style="left:0;top:246px;height:29px;overflow:hidden">11</div>
<div class="rh" style="left:0;top:275px;height:29px;overflow:hidden">12</div>
<div class="rh" style="left:0;top:304px;height:29px;background:#ffd75e;border-right:1px solid #f0a830;border-bottom:1px solid #f0a830;overflow:hidden">13</div>
<div class="rh" style="left:0;top:333px;height:29px;overflow:hidden">14</div>
<div class="rh" style="left:0;top:362px;height:29px;overflow:hidden">15</div>
<div class="rh" style="left:0;top:391px;height:29px;overflow:hidden">16</div>
<div class="rh" style="left:0;top:420px;height:29px;overflow:hidden">17</div>
<div class="rh" style="left:0;top:449px;height:29px;overflow:hidden">18</div>
<div class="rh" style="left:0;top:478px;height:29px;overflow:hidden">19</div>
<div class="rh" style="left:0;top:507px;height:29px;overflow:hidden">20</div>
<div class="rh" style="left:0;top:536px;height:29px;overflow:hidden">21</div>
<div class="rh" style="left:0;top:565px;height:29px;overflow:hidden">22</div>
<div class="rh" style="left:0;top:594px;height:29px;overflow:hidden">23</div>
<div class="rh" style="left:0;top:623px;height:29px;overflow:hidden">24</div>
<div class="rh" style="left:0;top:652px;height:29px;overflow:hidden">25</div>
<div class="rh" style="left:0;top:681px;height:29px;overflow:hidden">26</div>
<div class="rh" style="left:0;top:710px;height:29px;overflow:hidden">27</div>
<div class="rh" style="left:0;top:739px;height:29px;overflow:hidden">28</div>
<div class="rh" style="left:0;top:768px;height:29px;overflow:hidden">29</div>
<div class="rh" style="left:0;top:797px;height:29px;overflow:hidden">30</div>
<div class="rh" style="left:0;top:826px;height:29px;overflow:hidden">31</div>
<div class="rh" style="left:0;top:855px;height:29px;overflow:hidden">32</div>
<div class="rh" style="left:0;top:884px;height:29px;overflow:hidden">33</div>
<div class="rh" style="left:0;top:913px;height:29px;overflow:hidden">34</div>
<div class="rh" style="left:0;top:942px;height:29px;overflow:hidden">35</div>
<div class="rh" style="left:0;top:971px;height:12px;overflow:hidden">36</div>
<div class="a" style="left:147px;top:304px;width:89px;height:28px;background:#a6cdf0"></div>
<div class="a" style="left:548px;top:304px;width:179px;height:28px;background:#a6cdf0"></div>
<div class="cell" style="left:56px;top:246px;width:90px">B001</div>
<div class="cell" style="left:146px;top:248px;width:90px">이용감</div>
<div class="cell" style="left:236px;top:248px;width:131px">웹디자인과</div>
<div class="cell" style="left:367px;top:248px;width:90px">남</div>
<div class="cell" style="left:457px;top:246px;width:90px">29</div>
<div class="cell" style="left:547px;top:246px;width:90px">40</div>
<div class="cell" style="left:637px;top:246px;width:90px">10</div>
<div class="cell" style="left:727px;top:246px;width:90px">18</div>
<div class="cell" style="left:817px;top:246px;width:90px">97</div>
<div class="cell" style="left:56px;top:275px;width:90px">A004</div>
<div class="cell" style="left:146px;top:277px;width:90px">김튼튼</div>
<div class="cell" style="left:236px;top:277px;width:131px">정보처리과</div>
<div class="cell" style="left:367px;top:277px;width:90px">남</div>
<div class="cell" style="left:457px;top:275px;width:90px">30</div>
<div class="cell" style="left:547px;top:275px;width:90px">37</div>
<div class="cell" style="left:637px;top:275px;width:90px">8</div>
<div class="cell" style="left:727px;top:275px;width:90px">18</div>
<div class="cell" style="left:817px;top:275px;width:90px">93</div>
<div class="cell" style="left:56px;top:304px;width:90px">A001</div>
<div class="cell" style="left:146px;top:306px;width:90px">강성실</div>
<div class="cell" style="left:236px;top:306px;width:131px">정보처리과</div>
<div class="cell" style="left:367px;top:306px;width:90px">여</div>
<div class="cell" style="left:457px;top:304px;width:90px">25</div>
<div class="cell" style="left:547px;top:304px;width:90px">28</div>
<div class="cell" style="left:637px;top:304px;width:90px">5</div>
<div class="cell" style="left:727px;top:304px;width:90px">15</div>
<div class="cell" style="left:817px;top:304px;width:90px">73</div>
<div class="a" style="left:56px;top:274px;width:852px;height:1px;background:#000"></div>
<div class="a" style="left:56px;top:303px;width:852px;height:1px;background:#000"></div>
<div class="a" style="left:56px;top:332px;width:852px;height:1px;background:#000"></div>
<div class="a" style="left:56px;top:245px;width:1px;height:88px;background:#000"></div>
<div class="a" style="left:146px;top:245px;width:1px;height:88px;background:#000"></div>
<div class="a" style="left:236px;top:245px;width:1px;height:88px;background:#000"></div>
<div class="a" style="left:367px;top:245px;width:1px;height:88px;background:#000"></div>
<div class="a" style="left:457px;top:245px;width:1px;height:88px;background:#000"></div>
<div class="a" style="left:547px;top:245px;width:1px;height:88px;background:#000"></div>
<div class="a" style="left:637px;top:245px;width:1px;height:88px;background:#000"></div>
<div class="a" style="left:727px;top:245px;width:1px;height:88px;background:#000"></div>
<div class="a" style="left:817px;top:245px;width:1px;height:88px;background:#000"></div>
<div class="a" style="left:907px;top:245px;width:1px;height:88px;background:#000"></div>
<div class="a" style="left:146px;top:303px;width:92px;height:2px;background:repeating-linear-gradient(-45deg,#000 0,#000 2.8px,#fff 2.8px,#fff 5.6px)"></div>
<div class="a" style="left:146px;top:332px;width:92px;height:2px;background:repeating-linear-gradient(-45deg,#000 0,#000 2.8px,#fff 2.8px,#fff 5.6px)"></div>
<div class="a" style="left:146px;top:303px;width:2px;height:31px;background:repeating-linear-gradient(-45deg,#000 0,#000 2.8px,#fff 2.8px,#fff 5.6px)"></div>
<div class="a" style="left:236px;top:303px;width:2px;height:31px;background:repeating-linear-gradient(-45deg,#000 0,#000 2.8px,#fff 2.8px,#fff 5.6px)"></div>
<div class="a" style="left:457px;top:303px;width:272px;height:2px;background:repeating-linear-gradient(-45deg,#000 0,#000 2.8px,#fff 2.8px,#fff 5.6px)"></div>
<div class="a" style="left:457px;top:332px;width:272px;height:2px;background:repeating-linear-gradient(-45deg,#000 0,#000 2.8px,#fff 2.8px,#fff 5.6px)"></div>
<div class="a" style="left:457px;top:303px;width:2px;height:31px;background:repeating-linear-gradient(-45deg,#000 0,#000 2.8px,#fff 2.8px,#fff 5.6px)"></div>
<div class="a" style="left:727px;top:303px;width:2px;height:31px;background:repeating-linear-gradient(-45deg,#000 0,#000 2.8px,#fff 2.8px,#fff 5.6px)"></div>
<div class="a" style="left:459px;top:305px;width:89px;height:27px;border:1px solid #000"></div>
<!-- ===== Chart object ===== -->
<div class="a" style="left:49px;top:354px;width:685px;height:536px;border-radius:7px;background:rgba(238,238,240,.72);border:2px solid rgba(198,200,205,.62)"></div>
<div class="a" style="left:56px;top:361px;width:672px;height:523px;background:#fff;border:1px solid #9b9ea3"></div>
<svg class="a" style="left:57px;top:362px" width="8" height="8" viewBox="0 0 8 8"><path d="M0 0 H8 C3 1 1 3 0 8 Z" fill="#ececed" stroke="#b9bbbf" stroke-width="0.8"/></svg>
<svg class="a" style="left:719px;top:362px" width="8" height="8" viewBox="0 0 8 8"><path d="M8 0 H0 C5 1 7 3 8 8 Z" fill="#ececed" stroke="#b9bbbf" stroke-width="0.8"/></svg>
<svg class="a" style="left:57px;top:875px" width="8" height="8" viewBox="0 0 8 8"><path d="M0 8 H8 C3 7 1 5 0 0 Z" fill="#ececed" stroke="#b9bbbf" stroke-width="0.8"/></svg>
<svg class="a" style="left:719px;top:875px" width="8" height="8" viewBox="0 0 8 8"><path d="M8 8 H0 C5 7 7 5 8 0 Z" fill="#ececed" stroke="#b9bbbf" stroke-width="0.8"/></svg>
<div class="a" style="left:386px;top:357px;width:1px;height:1px;background:#a3a6ab"></div>
<div class="a" style="left:390px;top:357px;width:1px;height:1px;background:#a3a6ab"></div>
<div class="a" style="left:394px;top:357px;width:1px;height:1px;background:#a3a6ab"></div>
<div class="a" style="left:398px;top:357px;width:1px;height:1px;background:#a3a6ab"></div>
<div class="a" style="left:386px;top:886px;width:1px;height:1px;background:#a3a6ab"></div>
<div class="a" style="left:390px;top:886px;width:1px;height:1px;background:#a3a6ab"></div>
<div class="a" style="left:394px;top:886px;width:1px;height:1px;background:#a3a6ab"></div>
<div class="a" style="left:398px;top:886px;width:1px;height:1px;background:#a3a6ab"></div>
<div class="a" style="left:52px;top:616px;width:1px;height:1px;background:#a3a6ab"></div>
<div class="a" style="left:52px;top:620px;width:1px;height:1px;background:#a3a6ab"></div>
<div class="a" style="left:52px;top:624px;width:1px;height:1px;background:#a3a6ab"></div>
<div class="a" style="left:52px;top:628px;width:1px;height:1px;background:#a3a6ab"></div>
<div class="a" style="left:730px;top:616px;width:1px;height:1px;background:#a3a6ab"></div>
<div class="a" style="left:730px;top:620px;width:1px;height:1px;background:#a3a6ab"></div>
<div class="a" style="left:730px;top:624px;width:1px;height:1px;background:#a3a6ab"></div>
<div class="a" style="left:730px;top:628px;width:1px;height:1px;background:#a3a6ab"></div>
<div class="a" style="left:52px;top:357px;width:2px;height:2px;background:#b1b4b9"></div>
<div class="a" style="left:56px;top:357px;width:2px;height:2px;background:#b1b4b9"></div>
<div class="a" style="left:52px;top:361px;width:2px;height:2px;background:#b1b4b9"></div>
<div class="a" style="left:730px;top:357px;width:2px;height:2px;background:#b1b4b9"></div>
<div class="a" style="left:726px;top:357px;width:2px;height:2px;background:#b1b4b9"></div>
<div class="a" style="left:730px;top:361px;width:2px;height:2px;background:#b1b4b9"></div>
<div class="a" style="left:52px;top:886px;width:2px;height:2px;background:#b1b4b9"></div>
<div class="a" style="left:56px;top:886px;width:2px;height:2px;background:#b1b4b9"></div>
<div class="a" style="left:52px;top:882px;width:2px;height:2px;background:#b1b4b9"></div>
<div class="a" style="left:730px;top:886px;width:2px;height:2px;background:#b1b4b9"></div>
<div class="a" style="left:726px;top:886px;width:2px;height:2px;background:#b1b4b9"></div>
<div class="a" style="left:730px;top:882px;width:2px;height:2px;background:#b1b4b9"></div>
<div class="t c" style="left:191px;top:384px;width:400px;height:38px;line-height:38px;font-size:30px;font-weight:bold;color:#1073c5;-webkit-text-stroke:0.8px #1073c5">정보처리과 성적표</div>
<div class="a" style="left:190px;top:438px;width:403px;height:30px;background:#92d050;box-shadow:3px -3px 4px rgba(0,0,0,.55)"></div>
<div class="a" style="left:206px;top:448px;width:9px;height:10px;background:#4978ad"></div>
<div class="t" style="left:219px;top:444px;font-size:17px;line-height:22px;height:22px;color:#111">중간</div>
<div class="a" style="left:267px;top:448px;width:9px;height:10px;background:#b04d49"></div>
<div class="t" style="left:281px;top:444px;font-size:17px;line-height:22px;height:22px;color:#111">기말</div>
<div class="a" style="left:328px;top:448px;width:9px;height:10px;background:#8eaa53"></div>
<div class="t" style="left:341px;top:444px;font-size:17px;line-height:22px;height:22px;color:#111">과제</div>
<div class="a" style="left:389px;top:448px;width:9px;height:10px;background:#7a5c95"></div>
<div class="t" style="left:403px;top:444px;font-size:17px;line-height:22px;height:22px;color:#111">계열4</div>
<div class="a" style="left:459px;top:448px;width:9px;height:10px;background:#469cb6"></div>
<div class="t" style="left:473px;top:444px;font-size:17px;line-height:22px;height:22px;color:#111">계열5</div>
<div class="a" style="left:529px;top:448px;width:9px;height:10px;background:#e08843"></div>
<div class="t" style="left:543px;top:444px;font-size:17px;line-height:22px;height:22px;color:#111">계열6</div>
<div class="a" style="left:507px;top:411px;width:78px;height:25px;background:#fff;border:1px solid #767676;box-shadow:2px 2px 3px rgba(0,0,0,.35)"></div>
<div class="t c" style="left:507px;top:415px;width:78px;color:#575757;font-size:15px">차트 제목</div>
<svg class="a" style="left:57px;top:470px" width="670" height="320" viewBox="57 470 670 320">
<path d="M146.5 770.9 H705.5" stroke="#868686" stroke-width="1.4"/>
<path d="M146.5 731.4 H705.5" stroke="#868686" stroke-width="1.4"/>
<path d="M146.5 692.0 H705.5" stroke="#868686" stroke-width="1.4"/>
<path d="M146.5 652.5 H705.5" stroke="#868686" stroke-width="1.4"/>
<path d="M146.5 613.1 H705.5" stroke="#868686" stroke-width="1.4"/>
<path d="M146.5 573.6 H705.5" stroke="#868686" stroke-width="1.4"/>
<path d="M146.5 534.2 H705.5" stroke="#868686" stroke-width="1.4"/>
<path d="M146.5 494.8 H705.5" stroke="#868686" stroke-width="1.4"/>
<path d="M151.7 494.8 V776" stroke="#868686" stroke-width="1.4"/>
<path d="M284.3 770.9 V776.5" stroke="#868686" stroke-width="1.4"/>
<path d="M416.8 770.9 V776.5" stroke="#868686" stroke-width="1.4"/>
<path d="M549.3 770.9 V776.5" stroke="#868686" stroke-width="1.4"/>
<path d="M681.8 770.9 V776.5" stroke="#868686" stroke-width="1.4"/>
<rect x="170.0" y="715.67" width="102.6" height="55.23" fill="#4978ad"/>
<rect x="272.0" y="715.67" width="17.5" height="55.23" fill="#2c4a6c"/>
<rect x="170.0" y="640.71" width="102.6" height="75.66" fill="#b04d49"/>
<rect x="272.0" y="640.71" width="17.5" height="75.66" fill="#6c2d2a"/>
<rect x="170.0" y="624.93" width="102.6" height="16.48" fill="#8eaa53"/>
<rect x="272.0" y="624.93" width="17.5" height="16.48" fill="#56692f"/>
<rect x="170.0" y="575.62" width="102.6" height="50.01" fill="#7a5c95"/>
<rect x="272.0" y="575.62" width="17.5" height="50.01" fill="#4a385c"/>
<rect x="170.0" y="520.39" width="102.6" height="55.93" fill="#469cb6"/>
<rect x="272.0" y="520.39" width="17.5" height="55.93" fill="#29606f"/>
<rect x="170.0" y="510.53" width="102.6" height="10.56" fill="#e08843"/>
<rect x="272.0" y="510.53" width="17.5" height="10.56" fill="#8b5327"/>
<rect x="302.5" y="721.59" width="102.6" height="49.31" fill="#4978ad"/>
<rect x="404.5" y="721.59" width="17.5" height="49.31" fill="#2c4a6c"/>
<rect x="302.5" y="656.50" width="102.6" height="65.79" fill="#b04d49"/>
<rect x="404.5" y="656.50" width="17.5" height="65.79" fill="#6c2d2a"/>
<rect x="302.5" y="646.63" width="102.6" height="10.56" fill="#8eaa53"/>
<rect x="404.5" y="646.63" width="17.5" height="10.56" fill="#56692f"/>
<rect x="435.0" y="719.62" width="102.6" height="51.28" fill="#4978ad"/>
<rect x="537.0" y="719.62" width="17.5" height="51.28" fill="#2c4a6c"/>
<rect x="435.0" y="656.50" width="102.6" height="63.82" fill="#b04d49"/>
<rect x="537.0" y="656.50" width="17.5" height="63.82" fill="#6c2d2a"/>
<rect x="435.0" y="636.77" width="102.6" height="20.43" fill="#8eaa53"/>
<rect x="537.0" y="636.77" width="17.5" height="20.43" fill="#56692f"/>
<rect x="567.5" y="711.73" width="102.6" height="59.17" fill="#4978ad"/>
<rect x="669.5" y="711.73" width="17.5" height="59.17" fill="#2c4a6c"/>
<rect x="567.5" y="638.74" width="102.6" height="73.68" fill="#b04d49"/>
<rect x="669.5" y="638.74" width="17.5" height="73.68" fill="#6c2d2a"/>
<rect x="567.5" y="622.96" width="102.6" height="16.48" fill="#8eaa53"/>
<rect x="669.5" y="622.96" width="17.5" height="16.48" fill="#56692f"/>
</svg>
<div class="t" style="left:97px;top:761px;width:40px;text-align:right;font-size:15.5px;color:#000">0</div>
<div class="t" style="left:97px;top:721px;width:40px;text-align:right;font-size:15.5px;color:#000">20</div>
<div class="t" style="left:97px;top:682px;width:40px;text-align:right;font-size:15.5px;color:#000">40</div>
<div class="t" style="left:97px;top:643px;width:40px;text-align:right;font-size:15.5px;color:#000">60</div>
<div class="t" style="left:97px;top:603px;width:40px;text-align:right;font-size:15.5px;color:#000">80</div>
<div class="t" style="left:97px;top:564px;width:40px;text-align:right;font-size:15.5px;color:#000">100</div>
<div class="t" style="left:97px;top:524px;width:40px;text-align:right;font-size:15.5px;color:#000">120</div>
<div class="t" style="left:97px;top:485px;width:40px;text-align:right;font-size:15.5px;color:#000">140</div>
<div class="t c" style="left:167px;top:797px;width:100px;font-size:17px;line-height:22px;height:22px;color:#111">최고봉</div>
<div class="t c" style="left:300px;top:797px;width:100px;font-size:17px;line-height:22px;height:22px;color:#111">장샛별</div>
<div class="t c" style="left:432px;top:797px;width:100px;font-size:17px;line-height:22px;height:22px;color:#111">김승리</div>
<div class="t c" style="left:564px;top:797px;width:100px;font-size:17px;line-height:22px;height:22px;color:#111">김튼튼</div>
<div class="t c" style="left:365px;top:831px;width:100px;font-size:17px;line-height:22px;height:22px;font-weight:bold;color:#111">이름</div>
<div class="t c" style="left:73px;top:612px;width:40px;font-size:17px;line-height:22px;height:22px;font-weight:bold;color:#111">점</div>
<div class="t c" style="left:73px;top:639px;width:40px;font-size:17px;line-height:22px;height:22px;font-weight:bold;color:#111">수</div>
<!-- ===== Vertical scrollbar ===== -->
<div class="a" style="left:1896px;top:217px;width:20px;height:787px;background:linear-gradient(90deg,#d5d9e1,#dfe3ea 40%,#e3e6ed)"></div>
<div class="a" style="left:1916px;top:217px;width:1px;height:787px;background:#868d98"></div>
<div class="a" style="left:1917px;top:217px;width:3px;height:787px;background:#eef0f3"></div>
<div class="a" style="left:1896px;top:217px;width:19px;height:9px;background:#fff;border:1px solid #8a909a"></div>
<div class="a" style="left:1900px;top:220px;width:11px;height:1px;background:#8a909a"></div>
<div class="a" style="left:1900px;top:232px;width:0;height:0;border-left:5.5px solid transparent;border-right:5.5px solid transparent;border-bottom:6px solid #4d5056"></div>
<div class="a" style="left:1896px;top:452px;width:19px;height:510px;border:1px solid #868d98;border-radius:2px;background:linear-gradient(90deg,#f6f7fa,#e9ecf1 45%,#d8dce4)"></div>
<div class="a" style="left:1902px;top:702px;width:8px;height:1px;background:#8a909a"></div>
<div class="a" style="left:1902px;top:704px;width:8px;height:1px;background:#8a909a"></div>
<div class="a" style="left:1902px;top:706px;width:8px;height:1px;background:#8a909a"></div>
<div class="a" style="left:1902px;top:708px;width:8px;height:1px;background:#8a909a"></div>
<div class="a" style="left:1900px;top:969px;width:0;height:0;border-left:5.5px solid transparent;border-right:5.5px solid transparent;border-top:6px solid #4d5056"></div>
<div class="a" style="left:1897px;top:982px;width:19px;height:1px;background:#c9cdd5"></div>
<!-- ===== Sheet tab bar / h-scroll ===== -->
<div class="a" style="left:0;top:983px;width:1897px;height:20px;background:linear-gradient(#d5d9e0,#e2e5ea 30%,#dfe2e8)"></div>
<div class="a" style="left:0;top:983px;width:1138px;height:1px;background:#a9adb5"></div>
<div class="a" style="left:0;top:1003px;width:1920px;height:2px;background:linear-gradient(#8d939c,#b9bdc5)"></div>
<svg class="a" style="left:4px;top:986px" width="72" height="14" viewBox="0 0 72 14"><g fill="#4d5056"><rect x="1" y="2" width="1.6" height="10"/><path d="M10.500 2 V12 L4 7 Z"/><path d="M28.500 2 V12 L21 7 Z"/><path d="M40 2 V12 L47.500 7 Z"/><path d="M58 2 V12 L65 7 Z"/><rect x="66" y="2" width="1.6" height="10"/></g></svg>
<svg class="a" style="left:76px;top:983px" width="790" height="21" viewBox="76 983 790 21">
<path d="M79 984 V1002 H187" fill="none" stroke="#9aa0a8"/>
<path d="M184 1002.500 L197 983.500" fill="none" stroke="#8d939c" stroke-width="1"/>
<path d="M183 1003 l4 -5 l3 5 Z" fill="#c9cdd3" stroke="#a3a8b0" stroke-width="0.6"/>
<path d="M292 1002.500 L305 983.500" fill="none" stroke="#8d939c" stroke-width="1"/>
<path d="M291 1003 l4 -5 l3 5 Z" fill="#c9cdd3" stroke="#a3a8b0" stroke-width="0.6"/>
<path d="M379 1002.500 L392 983.500" fill="none" stroke="#8d939c" stroke-width="1"/>
<path d="M378 1003 l4 -5 l3 5 Z" fill="#c9cdd3" stroke="#a3a8b0" stroke-width="0.6"/>
<path d="M487 1002.500 L500 983.500" fill="none" stroke="#8d939c" stroke-width="1"/>
<path d="M486 1003 l4 -5 l3 5 Z" fill="#c9cdd3" stroke="#a3a8b0" stroke-width="0.6"/>
<path d="M807 1002.500 L820 983.500" fill="none" stroke="#8d939c" stroke-width="1"/>
<path d="M806 1003 l4 -5 l3 5 Z" fill="#c9cdd3" stroke="#a3a8b0" stroke-width="0.6"/>
<path d="M838 1002.500 L851 983.500" fill="none" stroke="#8d939c" stroke-width="1"/>
<path d="M837 1003 l4 -5 l3 5 Z" fill="#c9cdd3" stroke="#a3a8b0" stroke-width="0.6"/>
<path d="M595.500 983 V1002.500 H701 L714 983.500" fill="#fff" stroke="#8d939c"/>
<rect x="596" y="982" width="116" height="2.500" fill="#fff"/>
<path d="M79 1002.500 H595 M701 1002.500 H845" stroke="#9aa0a8" fill="none"/>
</svg>
<div class="t" style="left:88px;top:984px;font-size:18px;line-height:22px;height:22px;color:#4a4a4a;font-weight:300;letter-spacing:0px">기본작업-1</div>
<div class="t" style="left:194px;top:984px;font-size:18px;line-height:22px;height:22px;color:#4a4a4a;font-weight:300;letter-spacing:0px">기본작업-2</div>
<div class="t" style="left:302px;top:984px;font-size:18px;line-height:22px;height:22px;color:#4a4a4a;font-weight:300;letter-spacing:0px">계산작업</div>
<div class="t" style="left:390px;top:984px;font-size:18px;line-height:22px;height:22px;color:#4a4a4a;font-weight:300;letter-spacing:0px">분석작업-1</div>
<div class="t" style="left:498px;top:984px;font-size:18px;line-height:22px;height:22px;color:#4a4a4a;font-weight:300;letter-spacing:0px">분석작업-2</div>
<div class="t" style="left:604px;top:984px;font-size:18px;line-height:22px;height:22px;color:#222;font-weight:300;letter-spacing:0px">기타작업-1</div>
<div class="t" style="left:712px;top:984px;font-size:18px;line-height:22px;height:22px;color:#4a4a4a;font-weight:300;letter-spacing:0px">기타작업-2</div>
<svg class="a" style="left:819px;top:985px" width="18" height="15" viewBox="0 0 18 15"><rect x="4.500" y="3.500" width="11" height="8" fill="#e8eefc" stroke="#5b78b8"/><path d="M6 12 V14 H13 V12" fill="#fff" stroke="#8a909a" stroke-width="0.8"/><path d="M3.500 0 L4.600 2.400 L7 3.500 L4.600 4.600 L3.500 7 L2.400 4.600 L0 3.500 L2.400 2.400 Z" fill="#f0a020"/><path d="M1 1 L6 6 M6 1 L1 6" stroke="#f0a020" stroke-width="0.9"/></svg>
<div class="a" style="left:1138px;top:984px;width:758px;height:19px;background:linear-gradient(#d3d7df,#dde1e8 50%,#e3e6ec)"></div>
<div class="a" style="left:1138px;top:984px;width:9px;height:19px;background:#fff;border:1px solid #8a909a"></div>
<div class="a" style="left:1142px;top:988px;width:1px;height:11px;background:#8a909a"></div>
<div class="a" style="left:1153px;top:988px;width:0;height:0;border-top:5.500px solid transparent;border-bottom:5.500px solid transparent;border-right:6px solid #4d5056"></div>
<div class="a" style="left:1168px;top:984px;width:663px;height:19px;border:1px solid #868d98;border-radius:2px;background:linear-gradient(#f1f3f7,#e6e9ef 45%,#d6dae2)"></div>
<div class="a" style="left:1495px;top:990px;width:1px;height:7px;background:#8a909a"></div>
<div class="a" style="left:1497px;top:990px;width:1px;height:7px;background:#8a909a"></div>
<div class="a" style="left:1499px;top:990px;width:1px;height:7px;background:#8a909a"></div>
<div class="a" style="left:1501px;top:990px;width:1px;height:7px;background:#8a909a"></div>
<div class="a" style="left:1873px;top:988px;width:0;height:0;border-top:5.500px solid transparent;border-bottom:5.500px solid transparent;border-left:6px solid #4d5056"></div>
<div class="a" style="left:1887px;top:985px;width:9px;height:18px;background:#fff;border:1px solid #8a909a"></div>
<div class="a" style="left:1890px;top:988px;width:1px;height:11px;background:#8a909a"></div>
<!-- ===== Status bar ===== -->
<div class="a" style="left:0;top:1005px;width:1920px;height:25px;background:linear-gradient(#e5e8ec 0,#e1e4e9 30%,#d3d7dd 65%,#c7cbd2 90%,#cdd1d7 100%)"></div>
<div class="t" style="left:9px;top:1008px;color:#333;font-size:15px">대상을 선택한 다음 &lt;Enter&gt; 키를 누르거나 [붙여넣기]를 선택합니다.</div>
<div class="t" style="left:1358px;top:1008px;color:#333;font-size:15px">평균: 19.33333333</div>
<div class="t" style="left:1495px;top:1008px;color:#333;font-size:15px">개수: 4</div>
<div class="t" style="left:1557px;top:1008px;color:#333;font-size:15px">합계: 58</div>
<div class="a" style="left:1621px;top:1007px;width:1px;height:20px;background:#aeb3bb"></div>
<div class="a" style="left:1622px;top:1007px;width:1px;height:20px;background:#f1f3f6"></div>
<div class="a" style="left:1627px;top:1006px;width:23px;height:23px;background:linear-gradient(#fde48a,#fbc74c);border:1px solid #e0a030;border-radius:2px"></div>
<svg class="a" style="left:1631px;top:1011px" width="15" height="13" viewBox="0 0 15 13"><rect width="15" height="13" fill="#5c5c5c"/><g fill="#fff"><rect x="1" y="1" width="3.700" height="3"/><rect x="5.700" y="1" width="3.700" height="3"/><rect x="10.400" y="1" width="3.700" height="3"/><rect x="1" y="5" width="3.700" height="3"/><rect x="5.700" y="5" width="3.700" height="3"/><rect x="10.400" y="5" width="3.700" height="3"/><rect x="1" y="9" width="3.700" height="3"/><rect x="5.700" y="9" width="3.700" height="3"/><rect x="10.400" y="9" width="3.700" height="3"/></g></svg>
<svg class="a" style="left:1653px;top:1010px" width="17" height="15" viewBox="0 0 17 15"><rect x="0.500" y="0.500" width="16" height="14" fill="#bfc1c5" stroke="#6b6b6b"/><rect x="4" y="3" width="9" height="9" fill="#fff" stroke="#7a7a7a" stroke-width="0.800"/><path d="M5.500 5.500 H11.500 M5.500 7.500 H11.500 M5.500 9.500 H11.500" stroke="#b5b5b5" stroke-width="0.800"/></svg>
<svg class="a" style="left:1676px;top:1010px" width="17" height="14" viewBox="0 0 17 14"><rect x="0.500" y="0.500" width="16" height="13" fill="#9b9da1" stroke="#6b6b6b"/><rect x="2" y="1.500" width="3" height="7" fill="#fff"/><rect x="6" y="1.500" width="3" height="7" fill="#fff"/><rect x="10.500" y="1.500" width="5" height="3" fill="#e8e8ea"/><path d="M1 10 H10 V1" stroke="#5c5c5c" fill="none" stroke-width="1.200"/></svg>
<div class="t" style="left:1706px;top:1006px;color:#333;font-size:15px">100%</div>
<div class="a" style="left:1771px;top:1016px;width:125px;height:1px;background:#8a909a"></div>
<div class="a" style="left:1771px;top:1017px;width:125px;height:1px;background:#f4f5f7"></div>
<div class="a" style="left:1751px;top:1006px;width:20px;height:20px;border-radius:10px;border:1px solid #7b828c;background:linear-gradient(#fdfdfe,#dfe2e8)"></div>
<div class="a" style="left:1756px;top:1015px;width:10px;height:2px;background:#666a70"></div>
<div class="a" style="left:1896px;top:1006px;width:20px;height:20px;border-radius:10px;border:1px solid #7b828c;background:linear-gradient(#fdfdfe,#dfe2e8)"></div>
<div class="a" style="left:1901px;top:1015px;width:10px;height:2px;background:#666a70"></div>
<div class="a" style="left:1905px;top:1011px;width:2px;height:10px;background:#666a70"></div>
<svg class="a" style="left:1827px;top:1007px" width="13" height="18" viewBox="0 0 13 18"><path d="M1.500 1 H11.500 V11 L6.500 16.500 L1.500 11 Z" fill="#f3f4f7" stroke="#6f7680" stroke-width="1.2"/></svg>
<!-- ===== Windows taskbar ===== -->
<div class="a" style="left:0;top:1030px;width:1920px;height:50px;background:linear-gradient(90deg,#2b3033 0%,#2f3331 22%,#353732 55%,#33342f 100%)"></div>
<svg class="a" style="left:20px;top:1045px" width="21" height="21" viewBox="0 0 21 21"><path d="M0 3 L8.500 1.800 V9.800 H0 Z M9.800 1.600 L21 0 V9.800 H9.800 Z M0 11 H8.500 V19.200 L0 18 Z M9.800 11 H21 V21 L9.800 19.400 Z" fill="#fff"/></svg>
<div class="a" style="left:60px;top:1030px;width:430px;height:50px;background:#f1f1f1"></div>
<svg class="a" style="left:74px;top:1043px" width="24" height="24" viewBox="0 0 24 24"><circle cx="15" cy="9" r="6" fill="none" stroke="#222" stroke-width="1.600"/><path d="M10.800 13.200 L2 22" stroke="#222" stroke-width="1.600"/></svg>
<div class="t" style="left:111px;top:1043px;font-size:19px;line-height:26px;height:26px;color:#2e2e2e">검색하려면 여기에 입력하십시오.</div>
<!-- task view -->
<svg class="a" style="left:508px;top:1043px" width="24" height="22" viewBox="0 0 24 22"><g fill="none" stroke="#fff" stroke-width="1.400"><rect x="2.700" y="6.200" width="13" height="10"/><path d="M1.700 3.700 V1.200 H16.700 V3.700 M1.700 18.800 V21.300 H16.700 V18.800"/><path d="M21.300 0.500 V4.500 M21.300 17.500 V21.500"/><path d="M21.300 7.500 V14.500" stroke-width="2"/></g></svg>
<!-- IE -->
<svg class="a" style="left:567px;top:1038px" width="34" height="32" viewBox="0 0 34 32">
<path d="M16.500 5 C9 5 4.500 10.500 4.500 16.500 C4.500 23 9.500 27.500 16.500 27.500 C21.500 27.500 25.500 24.800 27.200 20.500 H20.500 C19.500 22 18.200 22.600 16.500 22.600 C13.500 22.600 11.500 20.700 11.300 18 H27.800 C28.500 10.500 23.500 5 16.500 5 Z M11.400 14 C11.800 11.500 13.800 9.800 16.400 9.800 C19 9.800 20.900 11.500 21.100 14 Z" fill="#35b5f0"/>
<path d="M3 27 C-1 22 6 11 16 5.500 C24 1 31 1 31.500 5 C31.800 7 30.500 9.500 29.500 11 C30 8.500 30 6.500 28 6 C24 5 15 10 9 17.500 C5 22.500 4 27 6.500 27.800 C8 28.300 10 27.500 11.500 26.500 C8.500 29.500 4.500 29.500 3 27 Z" fill="#f5c31b"/>
</svg>
<div class="a" style="left:559px;top:1077px;width:51px;height:3px;background:#76b9ed"></div>
<!-- folder -->
<svg class="a" style="left:631px;top:1041px" width="31" height="27" viewBox="0 0 31 27">
<path d="M1 3 Q1 1.500 2.500 1.500 H11 L13.500 4.500 H28 Q29.500 4.500 29.500 6 V24 H1 Z" fill="#e8a52a"/>
<path d="M1 7.500 H29.500 V24.500 Q29.500 25.500 28.500 25.500 H2 Q1 25.500 1 24.500 Z" fill="#fbd667"/>
<path d="M7 25.500 V17 Q7 16 8 16 H22.500 Q23.500 16 23.500 17 V25.500 H19.500 V20.500 H11 V25.500 Z" fill="#3f8ee0"/>
</svg>
<!-- store -->
<svg class="a" style="left:692px;top:1039px" width="31" height="31" viewBox="0 0 31 31">
<path d="M10 9 V6.500 C10 0.500 21 0.500 21 6.500 V9" fill="none" stroke="#fff" stroke-width="1.600"/>
<path d="M1 9 H30 V28.500 Q30 30 28.500 30 H2.500 Q1 30 1 28.500 Z" fill="#fff"/>
<rect x="9" y="13" width="6" height="6" fill="#f25022"/><rect x="16.300" y="13" width="6" height="6" fill="#7fba00"/><rect x="9" y="20.300" width="6" height="6" fill="#00a4ef"/><rect x="16.300" y="20.300" width="6" height="6" fill="#ffb900"/>
</svg>
<!-- settings gear -->
<svg class="a" style="left:754px;top:1039px" width="33" height="33" viewBox="0 0 33 33"><g fill="none" stroke="#fff" stroke-width="1.700">
<circle cx="15" cy="15.500" r="4.700"/>
<path d="M12.500 2 H17.500 L18.300 5.600 L21 6.800 L24.200 4.800 L27.600 8.300 L25.600 11.400 L26.700 14 L28 14.300 M27 18 L25.500 19.800 M12.500 29 L11.700 25.400 L9 24.200 L5.800 26.200 L2.300 22.700 L4.300 19.600 L3.200 17 L0.800 16.300 V13.300 L3.300 12.800 L4.400 10.600 L2.400 7.400 L5.900 4.800 L9 6.800 L11.700 5.600 L12.500 2 M12.500 29 H16"/>
</g><text x="21" y="32" font-family="Liberation Sans" font-size="14" fill="#fff">S</text></svg>
<!-- mail -->
<svg class="a" style="left:816px;top:1041px" width="32" height="26" viewBox="0 0 32 26">
<path d="M0.500 10 L16 0.500 L31.500 10 V25.500 H0.500 Z" fill="#fff"/>
<path d="M31.500 10.500 L14 15 L24 23" fill="none" stroke="#2f3230" stroke-width="1.800"/>
<path d="M31 10.700 L15 14.800 L23.500 21.500 Z" fill="#2f3230"/>
</svg>
<!-- magnifier app -->
<svg class="a" style="left:878px;top:1039px" width="33" height="32" viewBox="0 0 33 32">
<path d="M7 1 H22 L29 8 V30 H7 Z" fill="#e6e8f2" stroke="#b9bdd0"/>
<rect x="11" y="5" width="13" height="4" fill="#d9a0c0"/><rect x="17" y="13" width="10" height="6" fill="#9fc4e8"/><rect x="17" y="21" width="10" height="6" fill="#9fc4e8"/>
<circle cx="12" cy="16" r="9.500" fill="#a9c6e8" fill-opacity="0.850" stroke="#7d93b8" stroke-width="2"/>
<path d="M7 14 L13 17 L17 10" stroke="#d87a9a" stroke-width="1.300" fill="none"/>
<path d="M19 23.500 L26 30.500" stroke="#c8781e" stroke-width="4" stroke-linecap="round"/>
</svg>
<div class="a" style="left:869px;top:1077px;width:51px;height:3px;background:#76b9ed"></div>
<!-- excel active -->
<div class="a" style="left:926px;top:1030px;width:61px;height:50px;background:#565a57"></div>
<svg class="a" style="left:939px;top:1039px" width="33" height="31" viewBox="0 0 33 31">
<path d="M3 2 L27 0.500 V27 L3 29.500 Z" fill="#dff0d8" stroke="#3f8a3c"/>
<path d="M3 2 L20 1 V28 L3 29.500 Z" fill="#2e9a3a"/>
<path d="M6 6 L10 6 L12.500 11 L15.500 6 L19 6 L14.500 14 L19.500 23 L15.500 23 L12.500 17.500 L9.500 23 L5.500 23 L10.500 14 Z" fill="#fff"/>
<path d="M14 20 L32 17 V29 L14 30 Z" fill="#eef7ea" stroke="#6aa860" stroke-width="0.800"/><path d="M15 23 L31 21 M15 26 L31 24.500 M22 19 V30" stroke="#6aa860" stroke-width="0.800"/>
</svg>
<div class="a" style="left:926px;top:1077px;width:61px;height:3px;background:#76b9ed"></div>
<!-- tray -->
<svg class="a" style="left:1620px;top:1049px" width="18" height="11" viewBox="0 0 18 11"><path d="M1 10 L9 1.500 L17 10" fill="none" stroke="#fff" stroke-width="1.500"/></svg>
<svg class="a" style="left:1649px;top:1049px" width="22" height="13" viewBox="0 0 22 13"><rect x="0.800" y="1.300" width="18" height="10.400" fill="none" stroke="#fff" stroke-width="1.300"/><rect x="19.500" y="4.500" width="2" height="4" fill="#fff"/><rect x="2.500" y="3" width="4.500" height="7" fill="#fff"/></svg>
<svg class="a" style="left:1681px;top:1047px" width="18" height="17" viewBox="0 0 18 17"><g fill="none" stroke="#c9cac8" stroke-width="1.200"><path d="M1 16 C1 8 7 1.500 16 1"/><path d="M5.500 16 C5.500 10.500 10 6 16 5.500"/><path d="M10 16 C10 13 12.500 10.500 16 10" stroke="#fff"/></g><circle cx="14.300" cy="14.800" r="1.600" fill="#fff"/></svg>
<svg class="a" style="left:1707px;top:1048px" width="22" height="15" viewBox="0 0 22 15"><path d="M1 5 H4.500 L8.500 1 V14 L4.500 10 H1 Z" fill="none" stroke="#fff" stroke-width="1.200"/><path d="M12.500 4 L19.500 11 M19.500 4 L12.500 11" stroke="#fff" stroke-width="1.200"/></svg>
<div class="t" style="left:1738px;top:1044px;font-size:20px;line-height:26px;height:26px;color:#fff">가</div>
<div class="t c" style="left:1758px;top:1035px;width:100px;font-size:15px;color:#fff">오후 7:01</div>
<div class="t c" style="left:1758px;top:1056px;width:100px;font-size:15px;color:#fff">2020-01-16</div>
<svg class="a" style="left:1868px;top:1044px" width="32" height="32" viewBox="0 0 32 32"><path d="M1 1 H21 V19 H9 V24 L4 19 H1 Z" fill="#fff"/><path d="M4.500 6 H17.500 M4.500 10 H17.500 M4.500 14 H17.500" stroke="#32332f" stroke-width="1.500"/><circle cx="20" cy="21" r="9.300" fill="#32332f" stroke="#d0d0d0" stroke-width="1.200"/><text x="20" y="26" text-anchor="middle" font-family="Liberation Sans" font-weight="bold" font-size="13" fill="#fff">3</text></svg>
<div class="a" style="left:1914px;top:1030px;width:1px;height:50px;background:#6b6d6a"></div>
</body>
</html>
